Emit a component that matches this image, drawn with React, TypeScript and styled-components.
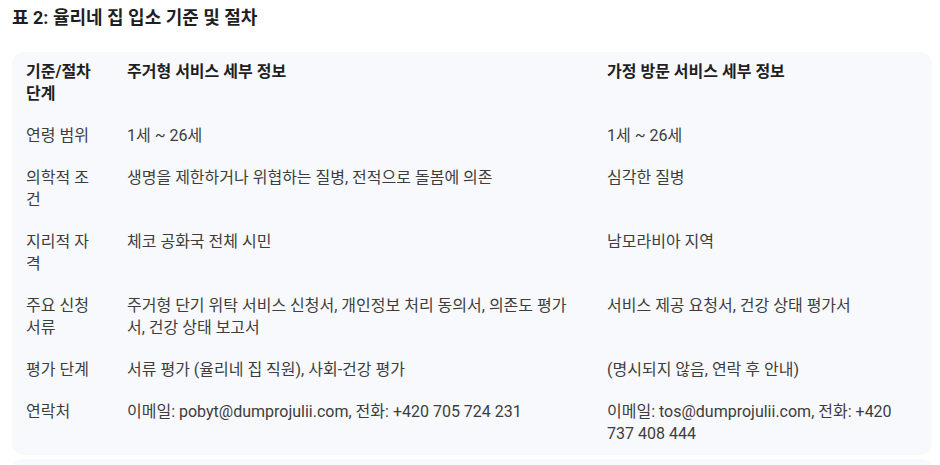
import React, { FC } from 'react';
import styled, { createGlobalStyle } from 'styled-components';

const GlobalStyle = createGlobalStyle`
  body {
    margin: 0;
    background: #fff;
    font-family: 'Roboto', 'Noto Sans CJK KR', sans-serif;
  }
`;

const Page = styled.div`
  padding: 5px 8px 0 12px;
`;

const Title = styled.h3`
  margin: 0 0 21px;

  font-size: 18px;
  font-weight: 700;
  line-height: 26px;
  color: #1f1f1f;
`;

const Panel = styled.div`
  padding: 0 14px;
  border-radius: 12px;

  background-color: #f8f9fc;
`;

const NextPanel = styled(Panel)`
  height: 20px;
  margin-top: 4px;
`;

const Table = styled.table`
  width: 100%;
  border-collapse: collapse;
  table-layout: fixed;

  font-size: 16px;
  line-height: 22px;
  color: #3d3d3d;
`;

const Col = styled.col<{ $width?: number }>`
  width: ${({ $width }) => ($width ? `${$width}px` : 'auto')};
`;

const HeadCell = styled.th<{ $gap?: number }>`
  padding: 9px ${({ $gap }) => $gap ?? 8}px 10px 0;

  font-weight: 700;
  text-align: left;
  vertical-align: top;
  color: #1f1f1f;
`;

const Cell = styled.td<{ $gap?: number }>`
  padding: 10px ${({ $gap }) => $gap ?? 8}px 10px 0;

  vertical-align: top;
`;

interface Row {
  label: string;
  residential: string;
  home: string;
}

const rows: Row[] = [
  { label: '연령 범위', residential: '1세 ~ 26세', home: '1세 ~ 26세' },
  {
    label: '의학적 조건',
    residential: '생명을 제한하거나 위협하는 질병, 전적으로 돌봄에 의존',
    home: '심각한 질병',
  },
  { label: '지리적 자격', residential: '체코 공화국 전체 시민', home: '남모라비아 지역' },
  {
    label: '주요 신청 서류',
    residential: '주거형 단기 위탁 서비스 신청서, 개인정보 처리 동의서, 의존도 평가서, 건강 상태 보고서',
    home: '서비스 제공 요청서, 건강 상태 평가서',
  },
  {
    label: '평가 단계',
    residential: '서류 평가 (율리네 집 직원), 사회-건강 평가',
    home: '(명시되지 않음, 연락 후 안내)',
  },
  {
    label: '연락처',
    residential: '이메일: pobyt@dumprojulii.com, 전화: +420 705 724 231',
    home: '이메일: tos@dumprojulii.com, 전화: +420 737 408 444',
  },
];

const App: FC = () => {
  return (
    <Page>
      <GlobalStyle />
      <Title>표 2: 율리네 집 입소 기준 및 절차</Title>
      <Panel>
        <Table>
          <colgroup>
            <Col $width={101} />
            <Col $width={480} />
            <Col />
          </colgroup>
          <thead>
            <tr>
              <HeadCell $gap={28}>기준/절차 단계</HeadCell>
              <HeadCell $gap={32}>주거형 서비스 세부 정보</HeadCell>
              <HeadCell>가정 방문 서비스 세부 정보</HeadCell>
            </tr>
          </thead>
          <tbody>
            {rows.map((row) => (
              <tr key={row.label}>
                <Cell $gap={28}>{row.label}</Cell>
                <Cell $gap={32}>{row.residential}</Cell>
                <Cell>{row.home}</Cell>
              </tr>
            ))}
          </tbody>
        </Table>
      </Panel>
      <NextPanel />
    </Page>
  );
};

export default App;
